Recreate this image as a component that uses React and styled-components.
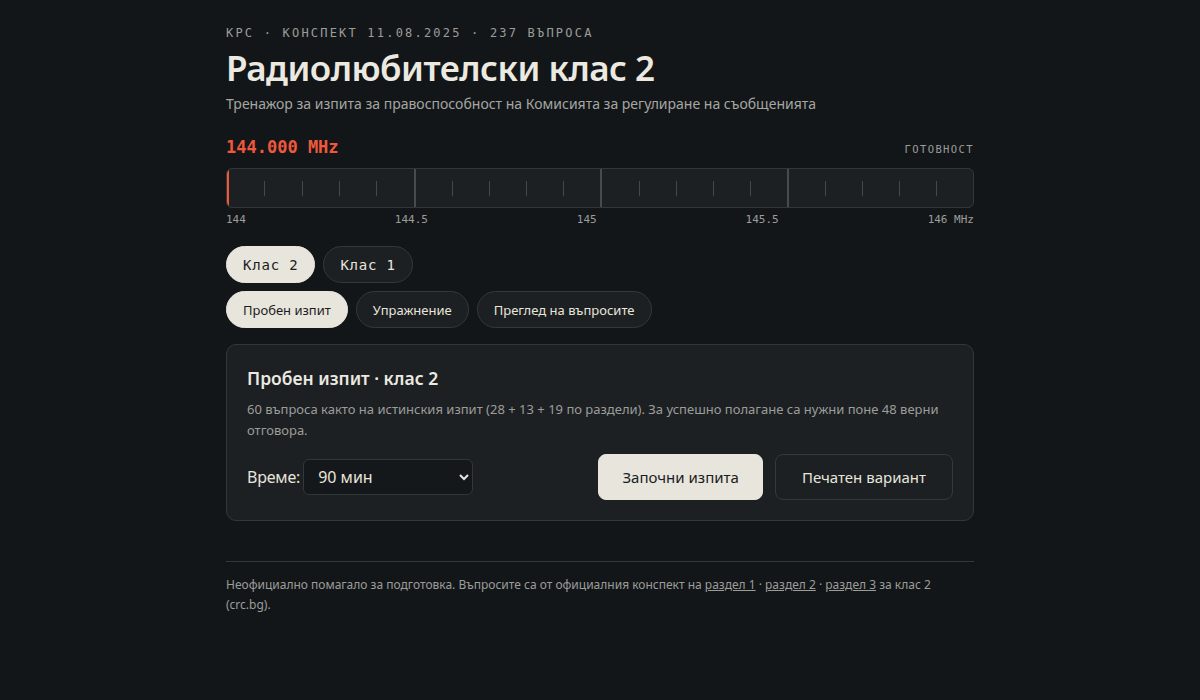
import React, { useState } from 'react';
import styled, { createGlobalStyle } from 'styled-components';

const GlobalStyle = createGlobalStyle`
	body {
		margin: 0;
		background: #131619;
		color: #e8e5dc;
		font-family: "Noto Sans", sans-serif;
	}
`

const MONO = `"DejaVu Sans Mono", monospace`;

const Page = styled.div`
	max-width: 748px;
	margin: 0 auto;
	padding: 24px 0 40px;
`

const Eyebrow = styled.div`
	font-family: ${MONO};
	font-size: 12px;
	letter-spacing: 2.2px;
	color: #9c9d99;
	line-height: 18px;
`

const Title = styled.h1`
	margin: 4px 0 0;
	font-size: 35px;
	font-weight: 600;
	line-height: 44px;
	color: #ece9e0;
	letter-spacing: -0.5px;
`

const Subtitle = styled.p`
	margin: 4px 0 0;
	font-size: 14px;
	line-height: 20px;
	color: #a5a6a2;
`

const FreqRow = styled.div`
	display: flex;
	justify-content: space-between;
	align-items: baseline;
	margin-top: 23px;
`

const FreqValue = styled.div`
	font-family: ${MONO};
	font-size: 17px;
	font-weight: bold;
	color: #f0583c;
`

const Status = styled.div`
	font-family: ${MONO};
	font-size: 10.5px;
	letter-spacing: 1.4px;
	color: #9c9d99;
`

const Dial = styled.div`
	position: relative;
	margin-top: 11px;
	height: 38px;
	border: 1px solid #33373b;
	border-radius: 6px;
	background: #1c2023;
	display: grid;
	grid-template-columns: repeat(4, 1fr);
	overflow: hidden;
`

const Segment = styled.div`
	display: grid;
	grid-template-columns: repeat(5, 1fr);
	align-items: center;
	border-left: ${p => p.$first ? 'none' : '2px solid #474b4f'};
`

const Tick = styled.div`
	height: 15px;
	border-left: ${p => p.$hidden ? 'none' : '1px solid #44484c'};
`

const Needle = styled.div`
	position: absolute;
	left: 0;
	top: 0;
	bottom: 0;
	width: 2px;
	background: #f0583c;
`

const Scale = styled.div`
	display: flex;
	justify-content: space-between;
	margin-top: 5px;
	font-family: ${MONO};
	font-size: 11px;
	color: #9c9d99;
`

const PillRow = styled.div`
	display: flex;
	gap: 8px;
	margin-top: ${p => p.$top}px;
`

const Pill = styled.button`
	height: 37px;
	padding: 0 16px;
	border-radius: 19px;
	border: 1px solid ${p => p.$active ? '#e8e5dc' : '#34383c'};
	background: ${p => p.$active ? '#e8e5dc' : '#1c2023'};
	color: ${p => p.$active ? '#1a1c1e' : '#e8e5dc'};
	font-family: ${p => p.$mono ? MONO : '"Noto Sans", sans-serif'};
	font-size: ${p => p.$mono ? '14px' : '13px'};
	letter-spacing: ${p => p.$mono ? '0.8px' : '0'};
	cursor: pointer;
`

const Card = styled.section`
	margin-top: 16px;
	padding: 20px;
	border: 1px solid #33373b;
	border-radius: 10px;
	background: #1c2023;
`

const CardTitle = styled.h2`
	margin: 0;
	font-size: 17.5px;
	font-weight: 600;
	line-height: 26px;
	color: #ece9e0;
`

const CardText = styled.p`
	margin: 8px 0 0;
	font-size: 13px;
	line-height: 21px;
	color: #9c9d99;
`

const Controls = styled.div`
	display: flex;
	align-items: center;
	justify-content: space-between;
	margin-top: 13px;
`

const TimeLabel = styled.label`
	display: flex;
	align-items: center;
	gap: 3px;
	font-size: 16px;
	letter-spacing: -0.2px;
	color: #e8e5dc;
`

const Select = styled.select`
	width: 170px;
	height: 36px;
	padding: 0 10px;
	border: 1px solid #33373b;
	border-radius: 6px;
	background: #15181b;
	color: #e8e5dc;
	font-family: "Noto Sans", sans-serif;
	font-size: 16px;
`

const Actions = styled.div`
	display: flex;
	gap: 12px;
`

const ActionButton = styled.button`
	height: 46px;
	padding: 0 ${p => p.$primary ? 23 : 26}px;
	border-radius: 8px;
	border: 1px solid ${p => p.$primary ? '#e8e5dc' : '#34383c'};
	background: ${p => p.$primary ? '#e8e5dc' : 'transparent'};
	color: ${p => p.$primary ? '#1a1c1e' : '#e8e5dc'};
	font-family: "Noto Sans", sans-serif;
	font-size: 15px;
	cursor: pointer;
`

const Footer = styled.footer`
	margin-top: 40px;
	padding-top: 13px;
	border-top: 1px solid #33373b;
	font-size: 12px;
	line-height: 20px;
	color: #9c9d99;
	a {
		color: #9c9d99;
		text-decoration: underline;
	}
`

function App () {
	const [klass, setKlass] = useState(2);
	const [mode, setMode] = useState('exam');

	const modes = [
		{ id: 'exam', label: 'Пробен изпит' },
		{ id: 'practice', label: 'Упражнение' },
		{ id: 'review', label: 'Преглед на въпросите' },
	];

	return (
		<div lang="bg">
			<GlobalStyle />
			<Page>
				<Eyebrow>КРС · КОНСПЕКТ 11.08.2025 · 237 ВЪПРОСА</Eyebrow>
				<Title>Радиолюбителски клас 2</Title>
				<Subtitle>Тренажор за изпита за правоспособност на Комисията за регулиране на съобщенията</Subtitle>

				<FreqRow>
					<FreqValue>144.000 MHz</FreqValue>
					<Status>ГОТОВНОСТ</Status>
				</FreqRow>
				<Dial>
					{[0, 1, 2, 3].map(i => (
						<Segment key={i} $first={i === 0}>
							{[0, 1, 2, 3, 4].map(j => <Tick key={j} $hidden={j === 0} />)}
						</Segment>
					))}
					<Needle />
				</Dial>
				<Scale>
					<span>144</span>
					<span>144.5</span>
					<span>145</span>
					<span>145.5</span>
					<span>146 MHz</span>
				</Scale>

				<PillRow $top={20}>
					<Pill $mono $active={klass === 2} onClick={() => setKlass(2)}>Клас 2</Pill>
					<Pill $mono $active={klass === 1} onClick={() => setKlass(1)}>Клас 1</Pill>
				</PillRow>
				<PillRow $top={8}>
					{modes.map(m => (
						<Pill key={m.id} $active={mode === m.id} onClick={() => setMode(m.id)}>{m.label}</Pill>
					))}
				</PillRow>

				<Card>
					<CardTitle>Пробен изпит · клас 2</CardTitle>
					<CardText>
						60 въпроса както на истинския изпит (28 + 13 + 19 по раздели). За успешно полагане са нужни поне 48 верни отговора.
					</CardText>
					<Controls>
						<TimeLabel>
							Време:
							<Select defaultValue="90">
								<option value="90">90 мин</option>
								<option value="60">60 мин</option>
								<option value="0">без ограничение</option>
							</Select>
						</TimeLabel>
						<Actions>
							<ActionButton $primary>Започни изпита</ActionButton>
							<ActionButton>Печатен вариант</ActionButton>
						</Actions>
					</Controls>
				</Card>

				<Footer>
					Неофициално помагало за подготовка. Въпросите са от официалния конспект на <a href="#r1">раздел 1</a> · <a href="#r2">раздел 2</a> · <a href="#r3">раздел 3</a> за клас 2 (crc.bg).
				</Footer>
			</Page>
		</div>
	);
}

export default App;
